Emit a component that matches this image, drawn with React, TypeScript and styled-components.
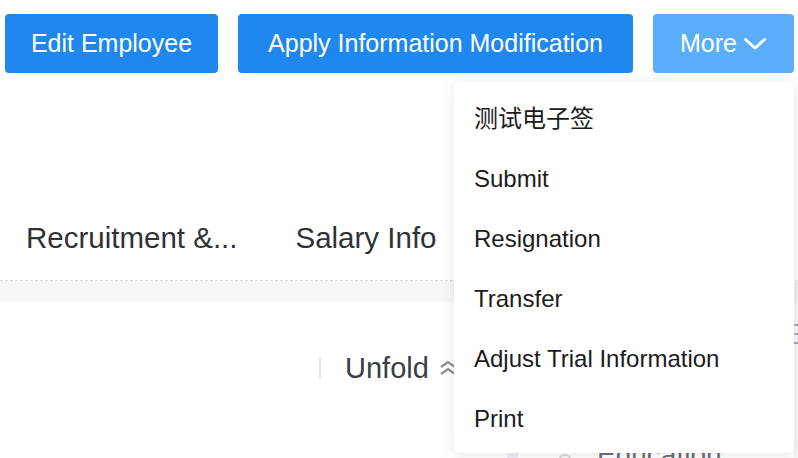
import React from "react";
import styled, { createGlobalStyle } from "styled-components";

const Global = createGlobalStyle`
  html, body { margin: 0; padding: 0; background: #ffffff; }
  body { font-family: "Liberation Sans", "Noto Sans CJK SC", Arial, sans-serif; overflow: hidden; }
  * { box-sizing: border-box; }
`;

const Page = styled.div`
  position: relative;
  width: 798px;
  height: 458px;
  overflow: hidden;
  background: #fff;
`;

const Toolbar = styled.div`
  display: flex;
  gap: 20px;
  padding: 14px 0 0 5px;
  height: 73px;
`;

const Button = styled.button<{ $w: number; $light?: boolean }>`
  width: ${(p) => p.$w}px;
  height: 59px;
  border: none;
  border-radius: 4px;
  background: ${(p) => (p.$light ? "#5aadf8" : "#1f87ee")};
  color: #fff;
  font-family: inherit;
  font-size: 25px;
  display: flex;
  align-items: center;
  justify-content: center;
  gap: 6px;
  padding: 0;
  cursor: pointer;
`;

const Spacer = styled.div`
  height: 126px;
`;

const Tabs = styled.div`
  display: flex;
  height: 82px;
  align-items: center;
  gap: 58px;
  padding: 0 0 0 26px;
  border-bottom: 1px dashed #dcdfe4;
`;

const Tab = styled.div`
  font-size: 29.5px;
  color: #303236;
  white-space: nowrap;
  padding-bottom: 4px;
`;

const Band = styled.div`
  height: 21px;
  background: #f6f7f9;
`;

const Content = styled.div`
  display: flex;
  flex-direction: column;
`;

const UnfoldRow = styled.div`
  display: flex;
  align-items: center;
  height: 110px;
  padding: 22px 0 0 319px;
`;

const Divider = styled.div`
  width: 2px;
  height: 20px;
  background: #dfe1e6;
  margin-right: 24px;
`;

const UnfoldText = styled.span`
  font-size: 29px;
  color: #3a3e45;
  margin-right: 11px;
`;

const EduRow = styled.div`
  display: flex;
  align-items: flex-start;
  padding-left: 507px;
  height: 60px;
`;

const EduBar = styled.div`
  width: 11px;
  height: 40px;
  margin-top: 36px;
  background: #eef0f3;
`;

const EduDot = styled.div`
  width: 14px;
  height: 14px;
  border-radius: 50%;
  border: 2px solid #d5d8dd;
  margin: 42px 0 0 40px;
`;

const EduText = styled.span`
  font-size: 28px;
  color: #6b6f76;
  margin: 27px 0 0 25px;
`;

const SideStrip = styled.div`
  position: absolute;
  right: 0;
  top: 282px;
  width: 4px;
  bottom: 0;
  background: #f6f6f8;
  display: flex;
  flex-direction: column;
  gap: 7px;
  padding-top: 42px;
`;

const StripTop = styled.div`
  position: absolute;
  top: 0;
  left: 0;
  right: 0;
  height: 20px;
  background: #eeeef1;
`;

const StripLine = styled.div`
  height: 2px;
  background: #a9abb2;
`;

const Menu = styled.div`
  position: absolute;
  left: 454px;
  top: 82px;
  width: 340px;
  background: #fff;
  border-radius: 6px;
  box-shadow: 0 2px 14px rgba(0, 0, 0, 0.1);
  padding: 7px 0 4px;
  display: flex;
  flex-direction: column;
`;

const MenuItem = styled.div<{ $cjk?: boolean }>`
  height: 60px;
  display: flex;
  align-items: center;
  padding-left: 20px;
  padding-bottom: ${(p) => (p.$cjk ? "6px" : "0")};
  font-size: 24px;
  color: #1b1b1b;
`;

const Chevron = () => (
  <svg width="24" height="14" viewBox="0 0 24 14" fill="none">
    <path d="M2.5 2.5l9.5 8.5 9.5-8.5" stroke="#fff" strokeWidth="3" strokeLinecap="round" strokeLinejoin="round" />
  </svg>
);

const DoubleUp = () => (
  <svg width="16" height="18" viewBox="0 0 16 18" fill="none">
    <path d="M1 8l7-5 7 5" stroke="#8c9097" strokeWidth="2.2" />
    <path d="M1 15l7-5 7 5" stroke="#8c9097" strokeWidth="2.2" />
  </svg>
);

const menuItems = ["测试电子签", "Submit", "Resignation", "Transfer", "Adjust Trial Information", "Print"];

export default function App() {
  return (
    <Page>
      <Global />
      <Toolbar>
        <Button $w={213}>Edit Employee</Button>
        <Button $w={395}>Apply Information Modification</Button>
        <Button $w={141} $light>
          More <Chevron />
        </Button>
      </Toolbar>
      <Spacer />
      <Tabs>
        <Tab>Recruitment &amp;...</Tab>
        <Tab>Salary Info</Tab>
      </Tabs>
      <Band />
      <Content>
        <UnfoldRow>
          <Divider />
          <UnfoldText>Unfold</UnfoldText>
          <DoubleUp />
        </UnfoldRow>
        <EduRow>
          <EduBar />
          <EduDot />
          <EduText>Education</EduText>
        </EduRow>
      </Content>
      <SideStrip>
        <StripTop />
        <StripLine />
        <StripLine />
        <StripLine />
      </SideStrip>
      <Menu>
        {menuItems.map((m, i) => (
          <MenuItem key={m} $cjk={i === 0}>
            {m}
          </MenuItem>
        ))}
      </Menu>
    </Page>
  );
}
